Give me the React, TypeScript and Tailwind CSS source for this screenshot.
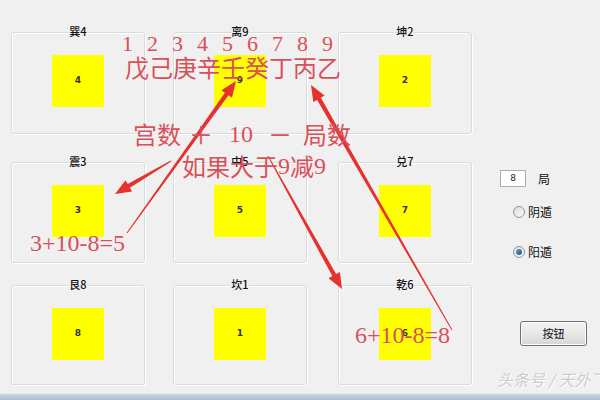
import React from 'react';

const rows = [
  [
    { title: '巽4', num: '4' },
    { title: '离9', num: '9' },
    { title: '坤2', num: '2' },
  ],
  [
    { title: '震3', num: '3' },
    { title: '中5', num: '5' },
    { title: '兑7', num: '7' },
  ],
  [
    { title: '艮8', num: '8' },
    { title: '坎1', num: '1' },
    { title: '乾6', num: '6' },
  ],
];

const rowClass = ['mt-[32px] h-[102px]', 'mt-[28px] h-[101px]', 'mt-[22px] h-[100px]'];
const colClass = ['', 'ml-[28px]', 'ml-[31px]'];

// tapered hand-drawn arrow, thin at the tail, head at (x2, y2)
function arrowPoints(x1: number, y1: number, x2: number, y2: number) {
  const dx = x2 - x1;
  const dy = y2 - y1;
  const len = Math.hypot(dx, dy);
  const ux = dx / len;
  const uy = dy / len;
  const nx = -uy;
  const ny = ux;
  const hl = 16;
  const hw = 6.5;
  const sw = 2.2;
  const tw = 0.5;
  const bx = x2 - ux * hl;
  const by = y2 - uy * hl;
  const p = (x: number, y: number) => `${x.toFixed(1)},${y.toFixed(1)}`;
  return [
    p(x1 + nx * tw, y1 + ny * tw),
    p(bx + nx * sw, by + ny * sw),
    p(bx + nx * hw, by + ny * hw),
    p(x2, y2),
    p(bx - nx * hw, by - ny * hw),
    p(bx - nx * sw, by - ny * sw),
    p(x1 - nx * tw, y1 - ny * tw),
  ].join(' ');
}

const arrows = [
  [171, 161, 115, 194],
  [127, 233, 236, 81],
  [452, 330, 311, 85],
  [268, 156, 342, 289],
];

function PalaceBox({ title, num, className }: { title: string; num: string; className: string }) {
  return (
    <div
      className={`relative w-[134px] rounded-[3px] border border-[#d9dcde] shadow-[inset_1px_1px_0_#fff,1px_1px_0_#fff] ${className}`}
    >
      <span className="absolute -top-[7px] left-1/2 -translate-x-1/2 bg-[#f0f0f0] text-[11px] leading-none font-medium text-[#111]">
        {title}
      </span>
      <div className="flex justify-center pt-[22px]">
        <div className="flex h-[52px] w-[52px] items-center justify-center bg-[#ffff00] font-['DejaVu_Sans',sans-serif] text-[9px] font-bold text-[#333]">
          {num}
        </div>
      </div>
    </div>
  );
}

function Radio({ label, checked }: { label: string; checked?: boolean }) {
  return (
    <div className="flex items-center">
      <div className="flex h-[12px] w-[12px] items-center justify-center rounded-full border border-[#959595] bg-gradient-to-br from-[#dcdcdc] to-[#fbfbfb]">
        {checked && <div className="h-[6px] w-[6px] rounded-full bg-gradient-to-br from-[#5fa4d6] to-[#1c4f7f]" />}
      </div>
      <span className="ml-[3px] text-[12px] leading-none text-[#111]">{label}</span>
    </div>
  );
}

export default function App() {
  return (
    <div className="relative h-[400px] w-[600px] overflow-hidden bg-[#f0f0f0] font-['Noto_Sans_CJK_SC',sans-serif]">
      <div className="flex h-[393px]">
        {/* palace grid */}
        <div className="flex flex-col pl-[11px]">
          {rows.map((row, r) => (
            <div key={r} className={`flex ${rowClass[r]}`}>
              {row.map((b, c) => (
                <PalaceBox key={b.title} title={b.title} num={b.num} className={colClass[c]} />
              ))}
            </div>
          ))}
        </div>

        {/* controls */}
        <div className="flex flex-col">
          <div className="ml-[28px] mt-[170px] flex items-center">
            <div className="flex h-[17px] w-[26px] items-center justify-center border border-[#abadb3] bg-white font-['DejaVu_Sans',sans-serif] text-[9px] text-[#222]">
              8
            </div>
            <span className="ml-[12px] text-[12px] leading-none text-[#111]">局</span>
          </div>
          <div className="ml-[41px] mt-[19px]">
            <Radio label="阴遁" />
          </div>
          <div className="ml-[41px] mt-[28px]">
            <Radio label="阳遁" checked />
          </div>
          <button className="ml-[48px] mt-[63px] h-[25px] w-[67px] rounded-[3px] border border-[#707070] bg-gradient-to-b from-[#f3f3f3] via-[#e8e8e8] to-[#d6d6d6] text-[11px] leading-none text-[#111] shadow-[inset_0_0_0_1px_#fcfcfc]">
            按钮
          </button>
        </div>
      </div>

      {/* window bottom frame */}
      <div className="h-[7px] border-t border-[#e4e9ef] bg-gradient-to-b from-[#c9d4e0] to-[#aebdd0]" />

      {/* watermark */}
      <div className="absolute left-[497px] top-[371px] whitespace-nowrap text-[16px] italic leading-none text-[#cdcdcd] [text-shadow:1px_1px_0_#fff]">
        头条号 / 天外飞仙
      </div>

      {/* red annotations */}
      <svg className="pointer-events-none absolute left-0 top-0" width="600" height="400" viewBox="0 0 600 400">
        {arrows.map((a, i) => (
          <polygon key={i} points={arrowPoints(a[0], a[1], a[2], a[3])} fill="#e6322f" />
        ))}
      </svg>

      <div className="pointer-events-none absolute inset-0 text-[#d9505a]">
        <div className="absolute left-[122px] top-[33px] font-['Liberation_Serif',serif] text-[22px] leading-none tracking-[14px]">
          123456789
        </div>
        <div className="absolute left-[125px] top-[55px] text-[24px] leading-none">戊己庚辛壬癸丁丙乙</div>
        <div className="absolute left-[133px] top-[122px] flex text-[24px] leading-none">
          <span>宫数</span>
          <span className="ml-[8px] w-[24px]">＋</span>
          <span className="ml-[16px] font-['Liberation_Serif',serif]">10</span>
          <span className="ml-[15px] w-[24px]">－</span>
          <span className="ml-[11px]">局数</span>
        </div>
        <div className="absolute left-[182px] top-[154px] flex text-[24px] leading-none">
          <span>如果大于</span>
          <span className="font-['Liberation_Serif',serif]">9</span>
          <span>减</span>
          <span className="font-['Liberation_Serif',serif]">9</span>
        </div>
        <div className="absolute left-[30px] top-[231px] font-['Liberation_Serif',serif] text-[24px] leading-none">
          3+10-8=5
        </div>
        <div className="absolute left-[355px] top-[323px] font-['Liberation_Serif',serif] text-[24px] leading-none">
          6+10-8=8
        </div>
      </div>
    </div>
  );
}
